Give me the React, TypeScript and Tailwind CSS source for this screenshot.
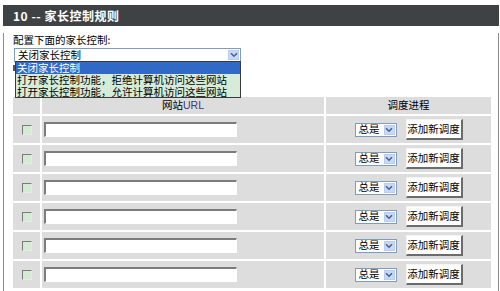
import React from "react";

const cjk = { fontFamily: '"Noto Sans CJK SC", "Liberation Sans", sans-serif' };

function Chevron({ className = "" }: { className?: string }) {
  return (
    <svg viewBox="0 0 8 6" className={className} width="8" height="6">
      <path d="M1 1.2 L4 4.2 L7 1.2" fill="none" stroke="#4d6185" strokeWidth="1.6" />
    </svg>
  );
}

function Row() {
  return (
    <>
      <div className="flex h-[27px] items-center justify-center bg-[#dddddd]">
        <div className="h-[10px] w-[10px] border border-b-[#e8e8e8] border-l-[#7a7a7a] border-r-[#e8e8e8] border-t-[#7a7a7a] bg-[#d3ebd3]" />
      </div>
      <div className="flex h-[27px] items-center bg-[#dddddd] pl-[2px]">
        <div className="h-[15px] w-[193px] border-b border-l-2 border-r border-t-2 border-b-white border-l-[#7c7c7c] border-r-white border-t-[#7c7c7c] bg-white" />
      </div>
      <div className="flex h-[27px] items-center justify-center gap-[9px] bg-[#dddddd]">
        <div className="flex h-[14px] w-[42px] items-center justify-between border border-[#7f9db9] bg-white pl-[3px] pr-[1px]">
          <span className="text-[10.5px] leading-none text-black">总是</span>
          <div className="flex h-[10px] w-[11px] items-center justify-center border border-[#b9cdf3] bg-[#c8d8f8]">
            <Chevron />
          </div>
        </div>
        <div className="flex h-[21px] w-[57px] items-center justify-center border-b-2 border-l border-r-2 border-t border-b-[#6b6b6b] border-l-[#f4f4f4] border-r-[#6b6b6b] border-t-[#f4f4f4] bg-white">
          <span className="text-[10.5px] leading-none text-black">添加新调度</span>
        </div>
      </div>
    </>
  );
}

export default function App() {
  return (
    <div className="relative h-[291px] w-[500px] overflow-hidden bg-white pl-[3px] pr-[1px] pt-[5px]" style={cjk}>
      <div className="flex h-[21px] items-center bg-[#3f4244] pl-[10px]">
        <span className="text-[12px] font-bold leading-none tracking-[0.5px] text-white">10 -- 家长控制规则</span>
      </div>
      <div className="h-[270px] border-l border-r border-[#8c8c8c] pl-[9px]">
        <div className="mt-[7px] h-[14px] text-[10.5px] leading-[14px] text-black">配置下面的家长控制:</div>
        <div className="ml-[1px] mt-px flex h-[14px] w-[227px] items-center justify-between border border-[#7f9db9] bg-white pl-[3px] pr-px">
          <span className="text-[10.5px] leading-none text-black">关闭家长控制</span>
          <div className="flex h-[10px] w-[11px] items-center justify-center border border-[#b9cdf3] bg-[#c8d8f8]">
            <Chevron />
          </div>
        </div>
        <div className="h-[35px] pt-[3px]">
          <div className="h-[6px] w-[2px] bg-[#555555]" />
        </div>
        <div className="grid grid-cols-[27px_282px_165px] gap-[2px]">
          <div className="h-[17px] bg-[#dddddd]" />
          <div className="flex h-[17px] items-center justify-center bg-[#dddddd] text-[10.5px] leading-none text-black">
            网站<span className="text-[#3b3a7a]" style={{ fontFamily: '"Liberation Sans", sans-serif' }}>URL</span>
          </div>
          <div className="flex h-[17px] items-center justify-center bg-[#dddddd] text-[10.5px] leading-none text-black">调度进程</div>
          <Row />
          <Row />
          <Row />
          <Row />
          <Row />
          <Row />
        </div>
      </div>
      <div className="absolute left-[15px] top-[61px] w-[226px] border border-[#3a3a3a] bg-[#d6ecd9]">
        <div className="h-[12px] bg-[#3169c6] pl-[1px] text-[10.5px] leading-[12px] text-white">关闭家长控制</div>
        <div className="h-[12px] pl-[1px] text-[10.5px] leading-[12px] text-black">打开家长控制功能，拒绝计算机访问这些网站</div>
        <div className="h-[11px] pl-[1px] text-[10.5px] leading-[12px] text-black">打开家长控制功能，允许计算机访问这些网站</div>
      </div>
    </div>
  );
}
